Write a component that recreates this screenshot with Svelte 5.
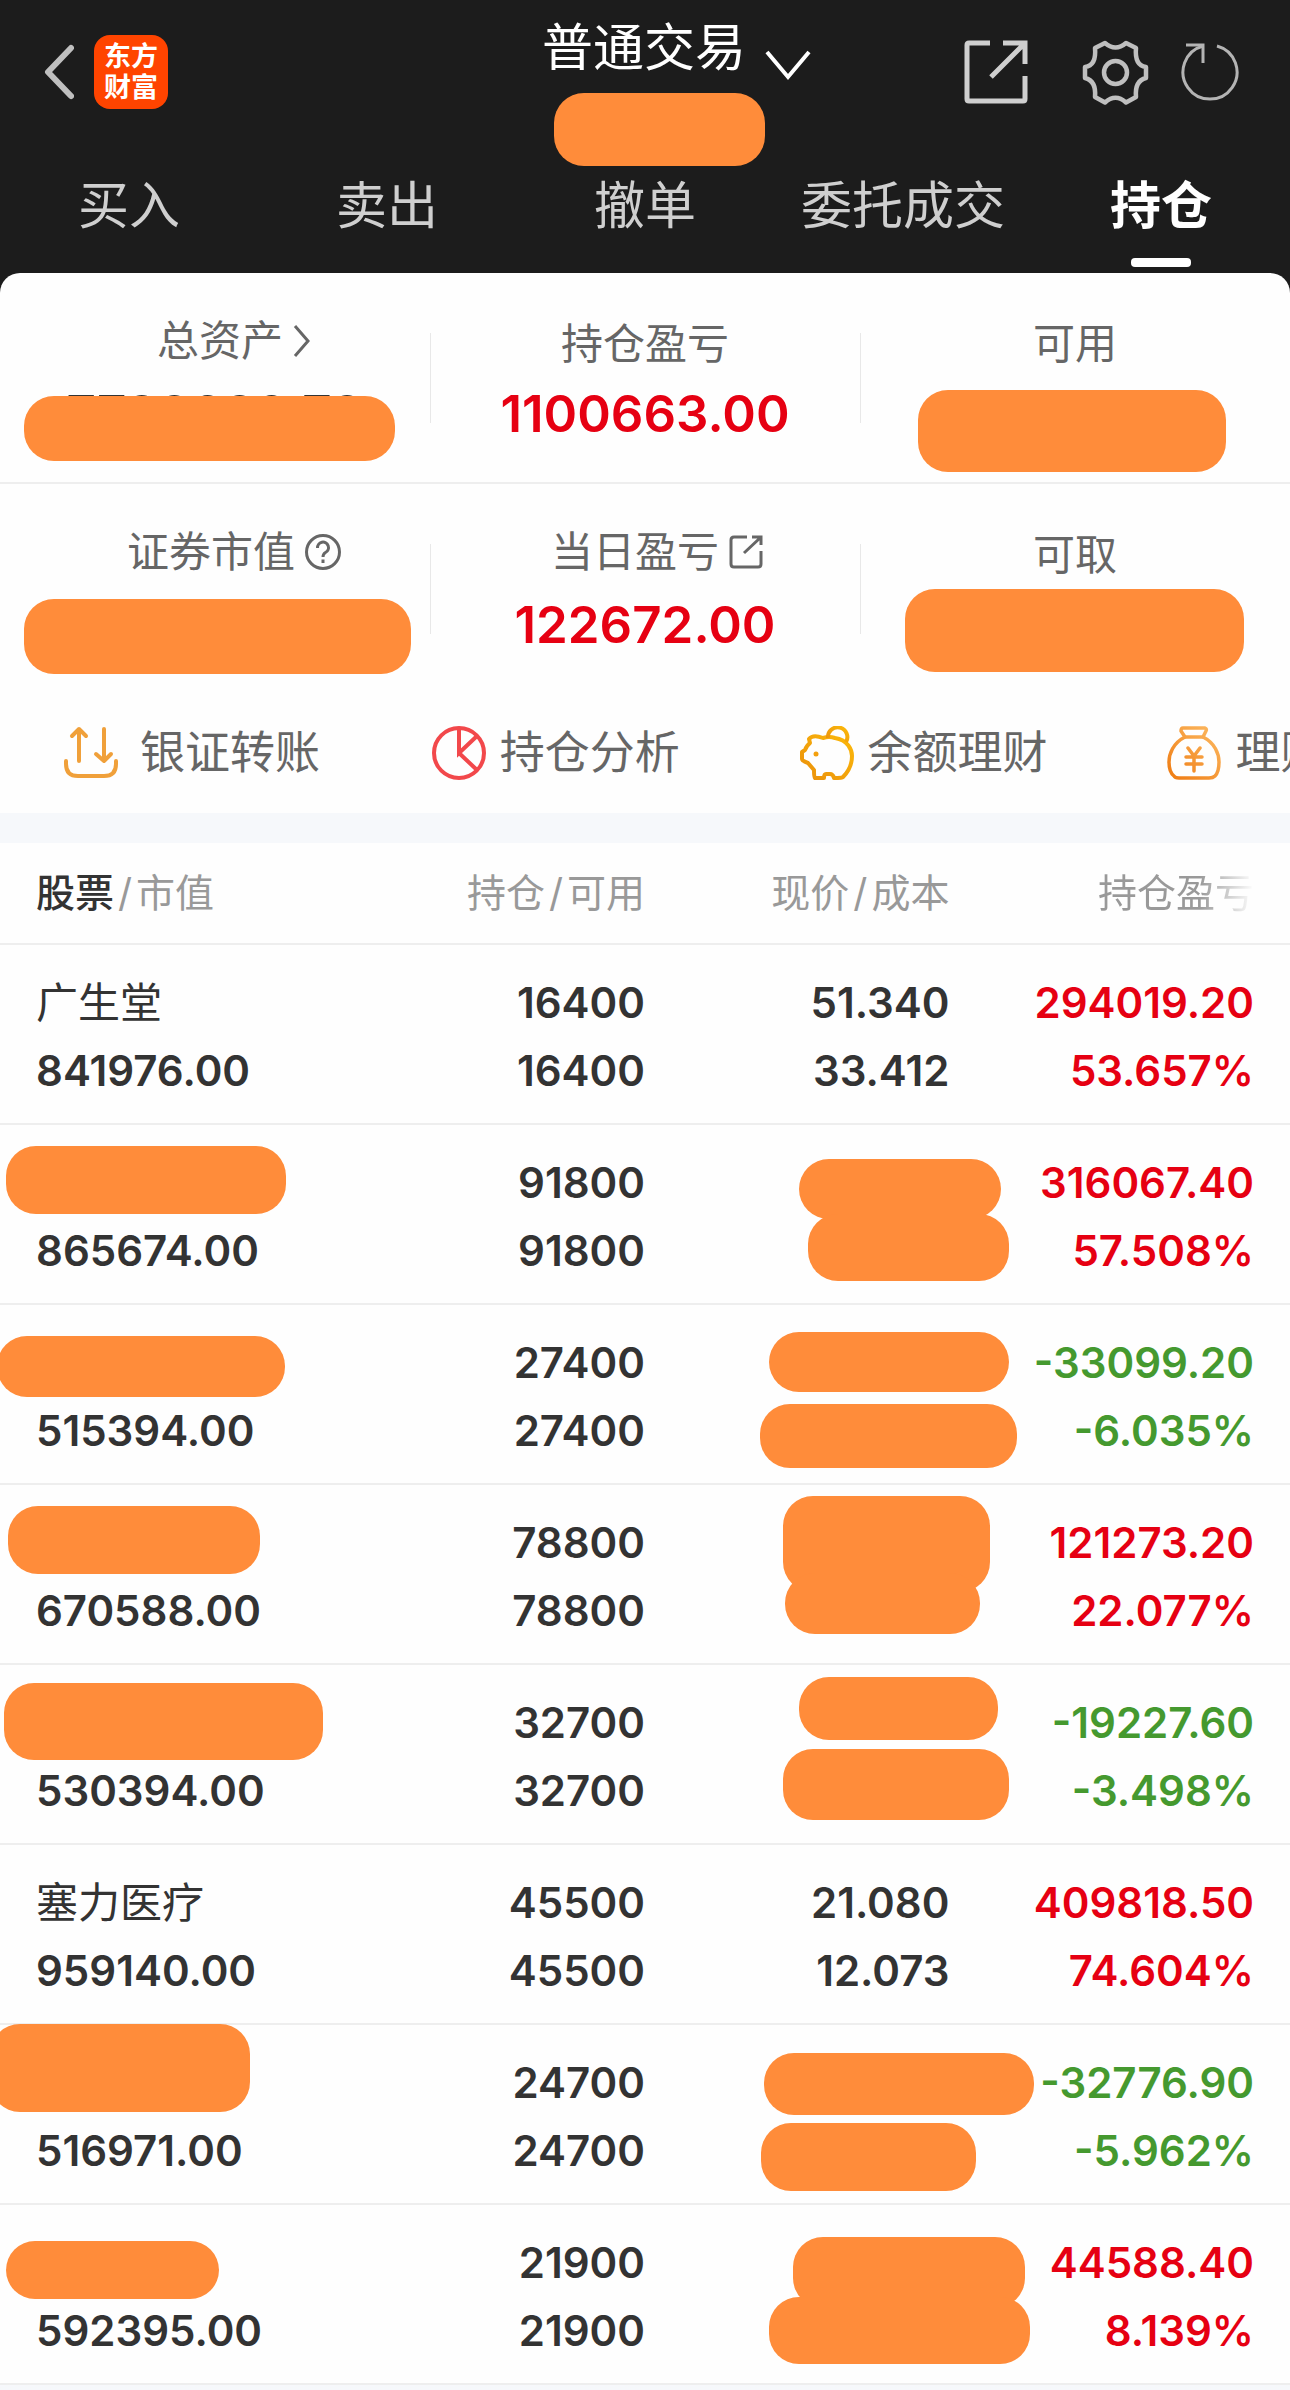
<script lang="ts">
  type Pill = { x: number; y: number; w: number; h: number };
  type Holding = {
    name?: string;
    value: string;
    shares: string;
    price?: string;
    cost?: string;
    gain: string;
    rate: string;
    namePill?: Pill;
    pricePills?: Pill[];
  };

  const tabs = ['买入', '卖出', '撤单', '委托成交', '持仓'];

  const holdings: Holding[] = [
    { name: '广生堂', value: '841976.00', shares: '16400', price: '51.340', cost: '33.412', gain: '294019.20', rate: '53.657%' },
    { value: '865674.00', shares: '91800', gain: '316067.40', rate: '57.508%', namePill: { x: 6, y: 21, w: 280, h: 68 }, pricePills: [{ x: 154, y: 34, w: 202, h: 60 }, { x: 163, y: 89, w: 201, h: 67 }] },
    { value: '515394.00', shares: '27400', gain: '-33099.20', rate: '-6.035%', namePill: { x: -3, y: 31, w: 288, h: 61 }, pricePills: [{ x: 124, y: 27, w: 240, h: 60 }, { x: 115, y: 99, w: 257, h: 64 }] },
    { value: '670588.00', shares: '78800', gain: '121273.20', rate: '22.077%', namePill: { x: 8, y: 21, w: 252, h: 68 }, pricePills: [{ x: 138, y: 11, w: 207, h: 96 }, { x: 140, y: 88, w: 195, h: 61 }] },
    { value: '530394.00', shares: '32700', gain: '-19227.60', rate: '-3.498%', namePill: { x: 4, y: 18, w: 319, h: 77 }, pricePills: [{ x: 154, y: 12, w: 199, h: 63 }, { x: 138, y: 84, w: 226, h: 71 }] },
    { name: '塞力医疗', value: '959140.00', shares: '45500', price: '21.080', cost: '12.073', gain: '409818.50', rate: '74.604%' },
    { value: '516971.00', shares: '24700', gain: '-32776.90', rate: '-5.962%', namePill: { x: -10, y: -1, w: 260, h: 88 }, pricePills: [{ x: 119, y: 28, w: 270, h: 62 }, { x: 116, y: 98, w: 215, h: 68 }] },
    { value: '592395.00', shares: '21900', gain: '44588.40', rate: '8.139%', namePill: { x: 6, y: 36, w: 213, h: 58 }, pricePills: [{ x: 148, y: 32, w: 232, h: 71 }, { x: 124, y: 92, w: 261, h: 67 }] }
  ];

  const box = (p: Pill) => `left:${p.x}px;top:${p.y}px;width:${p.w}px;height:${p.h}px`;
</script>

<div class="page">
  <header>
    <div class="bar">
      <div class="side">
        <button class="icon-btn" aria-label="返回">
          <svg width="32" height="56" viewBox="0 0 32 56"><path d="M29 4 L6 28 L29 52" fill="none" stroke="#bfbfbf" stroke-width="6" stroke-linecap="round" stroke-linejoin="round" /></svg>
        </button>
        <a class="logo" href="#home"><span>东方</span><span>财富</span></a>
      </div>
      <button class="account">
        <span>普通交易</span>
        <svg width="48" height="34" viewBox="0 0 48 34"><path d="M3 3 L24 28 L45 3" fill="none" stroke="#fff" stroke-width="4" /></svg>
        <i class="pill account-pill"></i>
      </button>
      <div class="side tools">
        <button class="icon-btn" aria-label="分享">
          <svg width="64" height="64" viewBox="0 0 64 64" fill="none" stroke="#cfcfcf" stroke-width="5"><path d="M26 3 H5 Q3 3 3 5 V59 Q3 61 5 61 H59 Q61 61 61 59 V36" /><path d="M39 3 H61 V24 M60 4 L27 37" /></svg>
        </button>
        <button class="icon-btn gear" aria-label="设置">
          <svg width="67" height="67" viewBox="0 0 67 67" fill="none" stroke="#bfbfbf" stroke-width="4.500" stroke-linejoin="round"><path d="M23 4 Q33.500 13 44 4 L54 9 C53 20 56 27 64 28 V39 C56 41 53 47 54 58 L44 63.500 Q33.500 54 23 63.500 L13 58 C14 47 11 41 3 39 V28 C11 27 14 20 13 9 Z" /><circle cx="33.500" cy="33.500" r="11.500" /></svg>
        </button>
        <button class="icon-btn" aria-label="刷新">
          <svg width="59" height="62" viewBox="0 0 59 62" fill="none" stroke="#b4b4b4" stroke-width="3"><path d="M36 5 A27 27 0 1 1 22 5" /><path d="M5 4 H22 V22" /></svg>
        </button>
      </div>
    </div>
    <nav>
      {#each tabs as tab, i}
        <a href="#tab{i}" class:active={i === tabs.length - 1}>{tab}</a>
      {/each}
    </nav>
  </header>

  <main>
    <section class="stats">
      <div class="cell">
        <div class="label lift">总资产<svg width="18" height="36" viewBox="0 0 18 36"><path d="M2 3 L15 18 L2 33" fill="none" stroke="#666" stroke-width="3" /></svg></div>
        <div class="value dark">7738689.78</div>
        <i class="pill total"></i>
      </div>
      <div class="cell"><div class="label">持仓盈亏</div><div class="value">1100663.00</div></div>
      <div class="cell"><div class="label">可用</div><i class="pill usable"></i></div>
    </section>
    <section class="stats">
      <div class="cell">
        <div class="label lift">证券市值<svg width="36" height="36" viewBox="0 0 36 36" fill="none" stroke="#666" stroke-width="3"><circle cx="18" cy="18" r="16.500" /><path d="M12.500 14 A5.500 5.500 0 1 1 20.500 18.500 Q18 20 18 23" /><path d="M18 25.500 V29" /></svg></div>
        <i class="pill market"></i>
      </div>
      <div class="cell">
        <div class="label lift daily">当日盈亏<svg width="34" height="34" viewBox="0 0 34 34" fill="none" stroke="#666" stroke-width="3"><path d="M18 2 H5 Q2 2 2 5 V29 Q2 32 5 32 H29 Q32 32 32 29 V16" /><path d="M23 2 H32 V10 M31 3 L15 18" /></svg></div>
        <div class="value">122672.00</div>
      </div>
      <div class="cell"><div class="label">可取</div><i class="pill takeout"></i></div>
    </section>

    <nav class="links">
      <a href="#transfer" class="wide">
        <svg width="54" height="54" viewBox="0 0 54 54" fill="none" stroke="#f0a03a" stroke-width="4" stroke-linecap="round" stroke-linejoin="round"><path d="M15 35 V3 M8 10 L15 3 L22 10 M40 3 V35 M32 28 L40 35 L47 28" /><path d="M2 35 V38 Q2 50 14 50 H40 Q52 50 52 38 V35" /></svg>
        银证转账
      </a>
      <a href="#analysis">
        <svg width="54" height="54" viewBox="0 0 54 54" fill="none" stroke="#f2484b" stroke-width="4"><circle cx="27" cy="27" r="25" /><path d="M27 2 V27 L45 10 M27 27 L45 44" /></svg>
        持仓分析
      </a>
      <a href="#balance">
        <svg width="54" height="54" viewBox="0 0 54 54" fill="none" stroke="url(#gold)" stroke-width="4" stroke-linejoin="round">
          <defs><linearGradient id="gold" x1="1" y1="0" x2="0" y2="1"><stop offset="0" stop-color="#fcb90a" /><stop offset="1" stop-color="#ea900c" /></linearGradient></defs>
          <path d="M9 13 Q13 8 23 12 Q29 10 35 12 C48 14 52 24 52 30 C52 39 48 46 43 51 Q42 52 34 52 Q33 48 30 48 H26 Q24 48 24 52 H15 Q14 51 14 44 L8 37 Q2 35 2 33 V26 L5 24 Q7 19 10 17 Z" /><path d="M28 12 A9.700 9.700 0 1 1 46 16" /><circle cx="16" cy="28" r="2.500" fill="#f3a00d" stroke="none" />
        </svg>
        余额理财
      </a>
      <a href="#wealth">
        <svg width="54" height="54" viewBox="0 0 54 54" fill="none" stroke="url(#amber)" stroke-width="3.500" stroke-linecap="round" stroke-linejoin="round">
          <defs><linearGradient id="amber" gradientUnits="userSpaceOnUse" x1="50" y1="4" x2="8" y2="50"><stop offset="0" stop-color="#fcb860" /><stop offset="1" stop-color="#f08018" /></linearGradient></defs>
          <path d="M16 2 H38 Q40 3 39 5 L36 11 H18 L14 5 Q14 2 16 2 Z" /><path d="M18 11 C6 17 2 28 2 36 Q2 46 7 50 Q8 52 12 52 H42 Q46 52 48 50 Q52 46 52 36 C52 28 48 17 36 11" /><path d="M21 22 L27 30 L33 22 M19 31 H35 M19 38 H35 M27 30 V45" />
        </svg>
        理财
      </a>
    </nav>

    <table>
      <thead>
        <tr>
          <th><b>股票</b><span class="slash">/</span>市值</th>
          <th>持仓<span class="slash">/</span>可用</th>
          <th>现价<span class="slash">/</span>成本</th>
          <th><span class="fade">持仓盈亏</span></th>
        </tr>
      </thead>
      <tbody>
        {#each holdings as h}
          <tr>
            <td>
              <div class="name">{h.name ?? ''}</div>
              <div>{h.value}</div>
              {#if h.namePill}<i class="pill" style={box(h.namePill)}></i>{/if}
            </td>
            <td><div>{h.shares}</div><div>{h.shares}</div></td>
            <td>
              <div>{h.price ?? ''}</div>
              <div>{h.cost ?? ''}</div>
              {#each h.pricePills ?? [] as p}<i class="pill" style={box(p)}></i>{/each}
            </td>
            <td class:down={h.gain.startsWith('-')}><div>{h.gain}</div><div>{h.rate}</div></td>
          </tr>
        {/each}
      </tbody>
    </table>
  </main>
</div>

<style>
  :global(body) {
    margin: 0;
    background: #f6f8fb;
  }
  .page {
    overflow: hidden;
    font-family: Inter, 'Noto Sans CJK SC', sans-serif;
    color: #333;
  }
  button {
    padding: 0;
    border: 0;
    background: none;
    font: inherit;
    color: inherit;
  }
  a {
    color: inherit;
    text-decoration: none;
  }
  svg {
    display: block;
    flex: none;
  }
  .pill {
    position: absolute;
    z-index: 1;
    border-radius: 30px;
    background: #ff8c3a;
  }

  header {
    background: #1c1c1c;
    padding-bottom: 20px;
    margin-bottom: -20px;
  }
  .bar {
    display: grid;
    grid-template-columns: 1fr auto 1fr;
    height: 144px;
    padding: 0 50px 0 42px;
  }
  .side {
    display: flex;
    align-items: center;
    gap: 20px;
  }
  .tools {
    justify-content: flex-end;
    gap: 32px;
  }
  .gear {
    margin-left: 22px;
  }
  .logo {
    display: flex;
    flex-direction: column;
    align-items: center;
    justify-content: center;
    width: 74px;
    height: 74px;
    border-radius: 16px;
    background: #ff4400;
    color: #fff;
    font-size: 27px;
    line-height: 31px;
    font-weight: 700;
  }
  .account {
    position: relative;
    display: flex;
    align-items: flex-start;
    gap: 18px;
    padding: 12px 0 0 72px;
    color: #fff;
    font-size: 51px;
    line-height: 72px;
  }
  .account svg {
    margin-top: 37px;
  }
  .account-pill {
    left: 84px;
    top: 93px;
    width: 211px;
    height: 73px;
  }
  header nav {
    display: grid;
    grid-template-columns: repeat(5, 1fr);
  }
  header nav a {
    display: flex;
    flex-direction: column;
    align-items: center;
    height: 129px;
    color: #cfcfcf;
    font-size: 51px;
    line-height: 124px;
  }
  header nav .active {
    color: #fff;
    font-weight: 700;
  }
  header nav .active::after {
    content: '';
    width: 60px;
    height: 9px;
    margin-top: -10px;
    border-radius: 4px;
    background: #fff;
  }

  main {
    position: relative;
    border-radius: 20px 20px 0 0;
    background: #fefefe;
  }
  .stats {
    display: grid;
    grid-template-columns: repeat(3, 1fr);
  }
  .stats:first-child {
    border-bottom: 2px solid #eee;
  }
  .cell {
    position: relative;
    height: 169px;
    padding-top: 40px;
    text-align: center;
  }
  .cell + .cell::before {
    content: '';
    position: absolute;
    left: 0;
    top: 60px;
    width: 1px;
    height: 90px;
    background: #e8e8e8;
  }
  .label {
    display: flex;
    align-items: center;
    justify-content: center;
    gap: 10px;
    height: 62px;
    font-size: 42px;
    line-height: 42px;
    color: #666;
  }
  .lift {
    height: 56px;
    margin-bottom: 6px;
  }
  .cell:first-child .label {
    padding-left: 38px;
  }
  .daily {
    padding-left: 24px;
  }
  .value {
    color: #e60012;
    font-size: 51px;
    line-height: 78px;
    font-weight: 600;
  }
  .dark {
    color: #333;
  }
  .total {
    left: 24px;
    top: 123px;
    width: 371px;
    height: 65px;
  }
  .usable {
    left: 58px;
    top: 117px;
    width: 308px;
    height: 82px;
  }
  .market {
    left: 24px;
    top: 115px;
    width: 387px;
    height: 75px;
  }
  .takeout {
    left: 45px;
    top: 105px;
    width: 339px;
    height: 83px;
  }

  .links {
    display: flex;
    height: 120px;
    padding-left: 64px;
    border-bottom: 30px solid #f6f8fb;
    overflow: hidden;
  }
  .links a {
    display: flex;
    flex: 0 0 30%;
    align-items: center;
    gap: 14px;
    white-space: nowrap;
    font-size: 45px;
    line-height: 46px;
    color: #666;
  }
  .links .wide {
    gap: 22px;
  }

  table {
    width: 100%;
    table-layout: fixed;
    border-collapse: separate;
    border-spacing: 0;
  }
  th,
  td {
    position: relative;
    box-sizing: border-box;
    padding: 0;
    border-bottom: 2px solid #eee;
    text-align: right;
    white-space: nowrap;
  }
  th {
    height: 102px;
    color: #999;
    font-size: 39px;
    line-height: 40px;
    font-weight: 400;
  }
  th b {
    color: #333;
    font-weight: 500;
  }
  th:nth-child(1) {
    width: 26%;
  }
  th:nth-child(2) {
    width: 24%;
  }
  th:nth-child(3) {
    width: 23.6%;
  }
  th:first-child,
  td:first-child {
    padding-left: 36px;
    text-align: left;
  }
  th:last-child,
  td:last-child {
    padding-right: 36px;
  }
  .slash {
    margin: 0 4px;
  }
  .fade {
    background: linear-gradient(90deg, #999 65%, #fefefe 100%);
    background-clip: text;
    color: transparent;
  }
  td {
    height: 180px;
    padding: 24px 0 0;
    vertical-align: top;
    font-size: 42px;
    line-height: 68px;
    font-weight: 600;
  }
  td div {
    height: 68px;
  }
  td .name {
    font-weight: 400;
  }
  td:last-child {
    color: #e60012;
  }
  td.down:last-child {
    color: #45992f;
  }
</style>
